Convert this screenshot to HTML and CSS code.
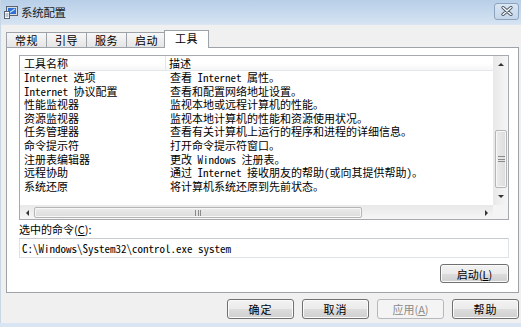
FILE: index.html
```html
<!DOCTYPE html>
<html lang="zh-CN">
<head>
    <meta charset="UTF-8">
    <meta name="viewport" content="width=device-width, initial-scale=1.0">
    <title>系统配置</title>
    <link rel="stylesheet" href="styles.css">
</head>
<body>
    <div class="window">
        <div class="titlebar">
            <svg class="app-icon" width="14" height="13" viewBox="0 0 14 13">
                <rect x="2.5" y="0.5" width="11" height="9" fill="#d8dde4" stroke="#5a6470"/>
                <rect x="4" y="2" width="8" height="6" fill="#2f6fd1"/>
                <path d="M5 7 L11 3" stroke="#bfe0ff" stroke-width="1.2"/>
                <rect x="0.5" y="5.5" width="5" height="7" fill="#ffffff" stroke="#5a6470"/>
                <path d="M1.5 8 H4.5 M1.5 10 H4.5" stroke="#7a8a9a"/>
            </svg>
            <span class="title">系统配置</span>
            <button class="close-btn">
                <svg width="12" height="10" viewBox="0 0 12 10">
                    <path d="M2 1.5 L10 8.5 M10 1.5 L2 8.5" stroke="#4d5866" stroke-width="3.2" stroke-linecap="round"/>
                    <path d="M2 1.5 L10 8.5 M10 1.5 L2 8.5" stroke="#ffffff" stroke-width="1.4" stroke-linecap="round"/>
                </svg>
            </button>
        </div>

        <div class="tabs">
            <div class="tab">常规</div>
            <div class="tab">引导</div>
            <div class="tab">服务</div>
            <div class="tab">启动</div>
            <div class="tab active">工具</div>
        </div>

        <div class="panel">
            <div class="listview">
                <div class="list-main">
                    <div class="list-header">
                        <div class="col-name">工具名称</div>
                        <div class="col-desc">描述</div>
                    </div>
                    <div class="list-rows">
                        <div class="row"><span class="col-name">Internet 选项</span><span class="col-desc">查看 Internet 属性。</span></div>
                        <div class="row"><span class="col-name">Internet 协议配置</span><span class="col-desc">查看和配置网络地址设置。</span></div>
                        <div class="row"><span class="col-name">性能监视器</span><span class="col-desc">监视本地或远程计算机的性能。</span></div>
                        <div class="row"><span class="col-name">资源监视器</span><span class="col-desc">监视本地计算机的性能和资源使用状况。</span></div>
                        <div class="row"><span class="col-name">任务管理器</span><span class="col-desc">查看有关计算机上运行的程序和进程的详细信息。</span></div>
                        <div class="row"><span class="col-name">命令提示符</span><span class="col-desc">打开命令提示符窗口。</span></div>
                        <div class="row"><span class="col-name">注册表编辑器</span><span class="col-desc">更改 Windows 注册表。</span></div>
                        <div class="row"><span class="col-name">远程协助</span><span class="col-desc">通过 Internet 接收朋友的帮助(或向其提供帮助)。</span></div>
                        <div class="row"><span class="col-name">系统还原</span><span class="col-desc">将计算机系统还原到先前状态。</span></div>
                    </div>
                </div>
                <div class="vscroll">
                    <div class="sb-btn"><span class="arrow-up"></span></div>
                    <div class="sb-track">
                        <div class="sb-thumb v-thumb"><span class="grip-v"></span></div>
                    </div>
                    <div class="sb-btn"><span class="arrow-down"></span></div>
                </div>
                <div class="hscroll">
                    <div class="sb-btn"><span class="arrow-left"></span></div>
                    <div class="sb-track">
                        <div class="sb-thumb h-thumb"><span class="grip-h"></span></div>
                    </div>
                    <div class="sb-btn"><span class="arrow-right"></span></div>
                </div>
                <div class="corner"></div>
            </div>

            <div class="cmd-label">选中的命令(<u>C</u>):</div>
            <div class="cmd-box">C:\Windows\System32\control.exe system</div>
            <div class="launch-row">
                <button class="btn launch">启动(<u>L</u>)</button>
            </div>
        </div>

        <div class="footer">
            <button class="btn">确定</button>
            <button class="btn">取消</button>
            <button class="btn" disabled>应用(<u>A</u>)</button>
            <button class="btn">帮助</button>
        </div>
    </div>
</body>
</html>
```

FILE: styles.css
```css
:root {
    --win-bg: #f0f0f0;
    --win-frame: #d9e5f2;
    --line: #adb2b8;
    --tab-line: #9ea3aa;
    --text: #000000;
}

* {
    margin: 0;
    padding: 0;
    box-sizing: border-box;
}

body {
    width: 521px;
    height: 327px;
    overflow: hidden;
    background-color: var(--win-frame);
    color: var(--text);
    font-family: "Noto Sans CJK SC", sans-serif;
    font-size: 11px;
}

.window {
    height: 323px;
    display: flex;
    flex-direction: column;
    background-color: var(--win-bg);
    border-left: 1px solid #c9d6e4;
}

/* title bar */
.titlebar {
    height: 25px;
    display: flex;
    align-items: center;
    padding-left: 3px;
    background: linear-gradient(#b8cfe8, #c9dbee 60%, #d5e3f2);
    border-bottom: 1px solid #dbe6f2;
}

.app-icon {
    margin-top: 1px;
}

.title {
    margin-left: 3px;
    font-size: 11.5px;
    line-height: 14px;
    color: #1b1b1b;
    letter-spacing: -0.3px;
}

.close-btn {
    margin-left: auto;
    margin-right: 2px;
    margin-top: -2px;
    width: 25px;
    height: 17px;
    display: flex;
    align-items: center;
    justify-content: center;
    border: 1px solid #8ea3bc;
    border-radius: 3px;
    background: linear-gradient(#d9e6f4, #c4d6ea);
}

/* tabs */
.tabs {
    display: flex;
    align-items: flex-end;
    height: 22px;
    padding-left: 5px;
    position: relative;
    z-index: 1;
}

.tab {
    width: 41px;
    height: 15px;
    margin-right: -1px;
    border: 1px solid var(--tab-line);
    border-bottom: none;
    background: linear-gradient(#f7f7f7, #e5e5e5);
    text-align: center;
    font-size: 11px;
    line-height: 14px;
    letter-spacing: 0.5px;
}

.tab.active {
    width: 45px;
    height: 18px;
    margin-left: -2px;
    margin-bottom: -1px;
    background: #ffffff;
    line-height: 15px;
}

/* tab panel */
.panel {
    height: 246px;
    margin: 0 2px 0 5px;
    padding: 7px 9px 0 12px;
    background-color: #ffffff;
    border: 1px solid var(--tab-line);
}

.listview {
    height: 165px;
    display: grid;
    grid-template-columns: 1fr 15px;
    grid-template-rows: 1fr 14px;
    border: 1px solid #a6a9ae;
    background-color: #ffffff;
}

.list-main {
    overflow: hidden;
}

.list-header {
    display: flex;
    height: 15px;
    border-bottom: 1px solid #e3e6ea;
    background: linear-gradient(#ffffff, #ffffff 50%, #f5f6f7);
    line-height: 14px;
}

.list-header .col-name {
    border-right: 1px solid #e3e6ea;
}

.list-rows {
    font-family: "Noto Sans Mono CJK SC", "Noto Sans CJK SC", monospace;
}

.row {
    display: flex;
    height: 13.6px;
    line-height: 13.6px;
    white-space: nowrap;
}

.col-name {
    width: 146px;
    flex-shrink: 0;
    padding-left: 4px;
}

.col-desc {
    padding-left: 4px;
}

.list-header .col-desc {
    padding-left: 3px;
}

/* scroll bars */
.vscroll,
.hscroll {
    display: flex;
    background: linear-gradient(90deg, #e9e9e9, #f6f6f6);
}

.vscroll {
    flex-direction: column;
    border-left: 1px solid #eaeaea;
}

.hscroll {
    background: linear-gradient(#e9e9e9, #f6f6f6);
    border-top: 1px solid #eaeaea;
}

.sb-btn {
    flex: 0 0 15px;
    display: flex;
    align-items: center;
    justify-content: center;
}

.vscroll .sb-btn {
    flex-basis: 17px;
}

.hscroll .sb-btn {
    flex-basis: 14px;
}

.sb-track {
    flex: 1;
    display: flex;
}

.vscroll .sb-track {
    flex-direction: column;
    justify-content: flex-end;
}

.sb-thumb {
    display: flex;
    align-items: center;
    justify-content: center;
    border: 1px solid #b5b5b5;
    border-radius: 2px;
    box-shadow: inset 0 0 0 1px #f7f7f7;
}

.v-thumb {
    height: 58px;
    margin: 0 1px;
    background: linear-gradient(90deg, #ebebeb, #dcdcdc);
}

.h-thumb {
    width: 328px;
    margin: 1px 0;
    background: linear-gradient(#ebebeb, #dcdcdc);
}

.grip-v {
    width: 7px;
    height: 6px;
    border-top: 1px solid #8a8a8a;
    border-bottom: 1px solid #8a8a8a;
    background: linear-gradient(transparent 2px, #8a8a8a 2px, #8a8a8a 3px, transparent 3px);
}

.grip-h {
    width: 6px;
    height: 6px;
    border-left: 1px solid #8a8a8a;
    border-right: 1px solid #8a8a8a;
    background: linear-gradient(90deg, transparent 2px, #8a8a8a 2px, #8a8a8a 3px, transparent 3px);
}

.arrow-up,
.arrow-down,
.arrow-left,
.arrow-right {
    width: 0;
    height: 0;
    border: 3px solid transparent;
}

.arrow-up {
    border-bottom-color: #333333;
    border-top-width: 0;
}

.arrow-down {
    border-top-color: #333333;
    border-bottom-width: 0;
}

.arrow-left {
    border-right-color: #333333;
    border-left-width: 0;
}

.arrow-right {
    border-left-color: #333333;
    border-right-width: 0;
}

.corner {
    background-color: #f4f4f4;
}

/* command line */
.cmd-label {
    margin-top: 2px;
    line-height: 14px;
}

.cmd-box {
    margin-top: 2px;
    height: 20px;
    padding-left: 2px;
    border: 1px solid #dfe3e8;
    border-top-color: #c9cdd2;
    font-family: "Noto Sans Mono CJK SC", "Noto Sans CJK SC", monospace;
    line-height: 18px;
}

.launch-row {
    display: flex;
    justify-content: flex-end;
    margin-top: 6px;
}

/* buttons */
.btn {
    width: 67px;
    height: 20px;
    border: 1px solid #707070;
    border-radius: 3px;
    background: linear-gradient(#f2f2f2, #ebebeb 50%, #dddddd 50%, #cfcfcf);
    box-shadow: inset 0 0 0 1px #fbfbfb;
    font-family: "Noto Sans CJK SC", sans-serif;
    font-size: 11px;
    line-height: 16px;
    color: var(--text);
    letter-spacing: 1px;
}

.btn.launch {
    width: 69px;
    height: 19px;
    letter-spacing: 0;
}

.btn:disabled {
    border-color: #b5b9bd;
    background: #f4f4f4;
    box-shadow: none;
    color: #8a8a8a;
    letter-spacing: 0;
}

.footer {
    display: flex;
    justify-content: flex-end;
    gap: 8px;
    padding: 6px 2px 0 0;
}
```
